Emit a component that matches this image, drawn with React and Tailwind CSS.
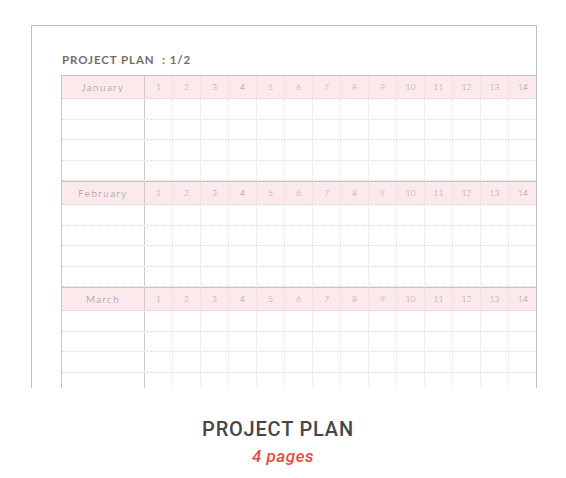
import React from "react";

const months = ["January", "February", "March"];
const days = Array.from({ length: 14 }, (_, i) => i + 1);

const Block = ({ month }) => (
  <div className="border-t border-[#c9c5c5]">
    <div className="flex h-[23px] bg-[#fbe9ec] border-b border-dotted border-[#d8cfd1]">
      <div className="w-[83px] shrink-0 flex items-center justify-center border-r border-[#cfcaca] text-[10px] font-light tracking-[0.14em] text-[#8a8686]">
        {month}
      </div>
      {days.map((d) => (
        <div
          key={d}
          className="w-[28px] shrink-0 flex items-center justify-center border-r border-dotted border-[#e2dadb] last:border-r-0 text-[8.5px] font-light text-[#a19d9d]"
        >
          {d}
        </div>
      ))}
    </div>
    {[0, 1, 2, 3].map((r) => (
      <div key={r} className="flex h-[20.5px] border-b border-dotted border-[#dedada]">
        <div className="w-[83px] shrink-0 border-r border-[#cfcaca]" />
        {days.map((d) => (
          <div
            key={d}
            className="w-[28px] shrink-0 border-r border-dotted border-[#e4e0e0] last:border-r-0"
          />
        ))}
      </div>
    ))}
  </div>
);

export default function App() {
  return (
    <div className="w-[566px] h-[478px] bg-white overflow-hidden font-['Lato',sans-serif]">
      <div className="pt-[25px] pl-[31px]">
        <div className="w-[506px] h-[363px] border-t border-l border-r border-[#bdbdbd] overflow-hidden">
          <div className="pl-[30px] pt-[28px] h-[49px] text-[11.5px] font-bold tracking-[0.08em] text-[#726e6e] leading-none">
            PROJECT PLAN&nbsp;&nbsp;:&nbsp;1/2
          </div>
          <div className="ml-[29px] border-l border-[#c9c5c5]">
            {months.map((m) => (
              <Block key={m} month={m} />
            ))}
          </div>
        </div>
      </div>
      <div className="flex flex-col items-center pt-[31px]">
        <div className="mr-[10px] font-['Roboto',sans-serif] font-medium text-[20px] leading-none tracking-[0.04em] text-[#464646]">
          PROJECT PLAN
        </div>
        <div className="mt-[9px] font-['Roboto',sans-serif] font-medium italic text-[17px] leading-none tracking-[0.03em] text-[#ea4a43]">
          4 pages
        </div>
      </div>
    </div>
  );
}
